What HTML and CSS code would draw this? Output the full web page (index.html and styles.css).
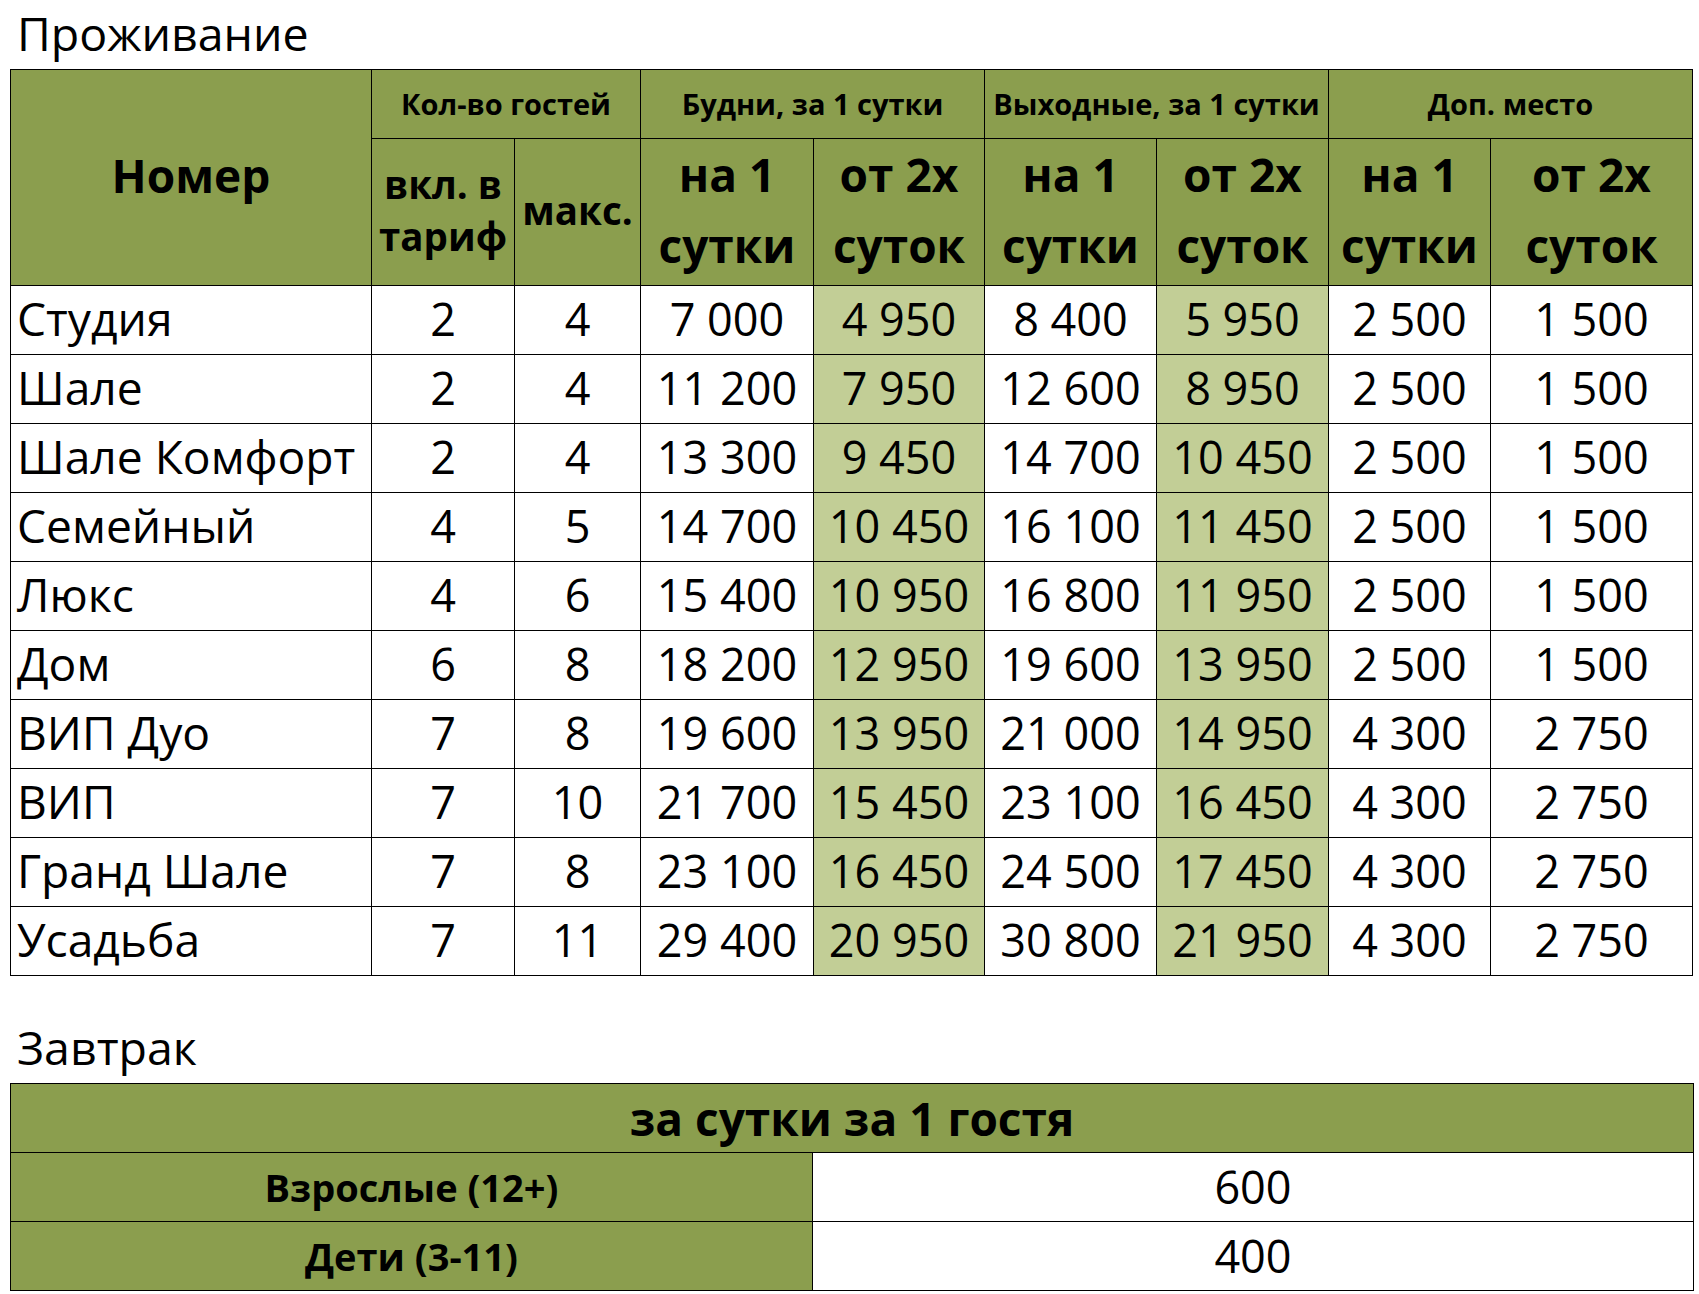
FILE: index.html
```html
<!DOCTYPE html>
<html lang="ru">
<head>
<meta charset="utf-8">
<title>Цены</title>
<link rel="stylesheet" href="styles.css">
</head>
<body>
<div class="page">
  <h2 class="section-title first">Проживание</h2>
  <table class="price">
    <colgroup>
      <col class="w-name"><col class="w-incl"><col class="w-max">
      <col class="w-a"><col class="w-b"><col class="w-c"><col class="w-d">
      <col class="w-e"><col class="w-f">
    </colgroup>
    <thead>
      <tr class="h1">
        <th rowspan="2" class="big">Номер</th>
        <th colspan="2" class="small">Кол-во гостей</th>
        <th colspan="2" class="small">Будни, за 1 сутки</th>
        <th colspan="2" class="small">Выходные, за 1 сутки</th>
        <th colspan="2" class="small">Доп. место</th>
      </tr>
      <tr class="h2">
        <th class="mid">вкл. в<br>тариф</th>
        <th class="mid">макс.</th>
        <th class="big tall">на 1<br>сутки</th>
        <th class="big tall">от 2х<br>суток</th>
        <th class="big tall">на 1<br>сутки</th>
        <th class="big tall">от 2х<br>суток</th>
        <th class="big tall">на 1<br>сутки</th>
        <th class="big tall">от 2х<br>суток</th>
      </tr>
    </thead>
    <tbody>
      <tr><td class="name">Студия</td><td>2</td><td>4</td><td>7 000</td><td class="hl">4 950</td><td>8 400</td><td class="hl">5 950</td><td>2 500</td><td>1 500</td></tr>
      <tr><td class="name">Шале</td><td>2</td><td>4</td><td>11 200</td><td class="hl">7 950</td><td>12 600</td><td class="hl">8 950</td><td>2 500</td><td>1 500</td></tr>
      <tr><td class="name">Шале Комфорт</td><td>2</td><td>4</td><td>13 300</td><td class="hl">9 450</td><td>14 700</td><td class="hl">10 450</td><td>2 500</td><td>1 500</td></tr>
      <tr><td class="name">Семейный</td><td>4</td><td>5</td><td>14 700</td><td class="hl">10 450</td><td>16 100</td><td class="hl">11 450</td><td>2 500</td><td>1 500</td></tr>
      <tr><td class="name">Люкс</td><td>4</td><td>6</td><td>15 400</td><td class="hl">10 950</td><td>16 800</td><td class="hl">11 950</td><td>2 500</td><td>1 500</td></tr>
      <tr><td class="name">Дом</td><td>6</td><td>8</td><td>18 200</td><td class="hl">12 950</td><td>19 600</td><td class="hl">13 950</td><td>2 500</td><td>1 500</td></tr>
      <tr><td class="name">ВИП Дуо</td><td>7</td><td>8</td><td>19 600</td><td class="hl">13 950</td><td>21 000</td><td class="hl">14 950</td><td>4 300</td><td>2 750</td></tr>
      <tr><td class="name">ВИП</td><td>7</td><td>10</td><td>21 700</td><td class="hl">15 450</td><td>23 100</td><td class="hl">16 450</td><td>4 300</td><td>2 750</td></tr>
      <tr><td class="name">Гранд Шале</td><td>7</td><td>8</td><td>23 100</td><td class="hl">16 450</td><td>24 500</td><td class="hl">17 450</td><td>4 300</td><td>2 750</td></tr>
      <tr><td class="name">Усадьба</td><td>7</td><td>11</td><td>29 400</td><td class="hl">20 950</td><td>30 800</td><td class="hl">21 950</td><td>4 300</td><td>2 750</td></tr>
    </tbody>
  </table>

  <h2 class="section-title second">Завтрак</h2>
  <table class="price breakfast">
    <colgroup>
      <col class="w-left"><col class="w-right">
    </colgroup>
    <thead>
      <tr><th colspan="2" class="bh">за сутки за 1 гостя</th></tr>
    </thead>
    <tbody>
      <tr><th class="bl">Взрослые (12+)</th><td>600</td></tr>
      <tr><th class="bl">Дети (3-11)</th><td>400</td></tr>
    </tbody>
  </table>
</div>
</body>
</html>
```

FILE: styles.css
```css
html, body {
  margin: 0;
  padding: 0;
  background: #ffffff;
}

body {
  font-family: "Open Sans", "Noto Sans", "DejaVu Sans", sans-serif;
  color: #000000;
}

.page {
  padding: 0 0 0 10px;
}

.section-title {
  font-weight: 400;
  font-size: 46.5px;
  line-height: 62px;
  margin: 0;
  padding-left: 7px;
}

.section-title.first {
  margin-top: 2px;
  margin-bottom: 5px;
}

.section-title.second {
  margin-top: 40px;
  margin-bottom: 5px;
}

.price {
  border-collapse: collapse;
  table-layout: fixed;
  width: 1683px;
}

.price th,
.price td {
  border: 1px solid #000000;
  padding: 0;
  text-align: center;
  vertical-align: middle;
  white-space: nowrap;
  overflow: hidden;
}

.w-name { width: 361px; }
.w-incl { width: 143px; }
.w-max { width: 126px; }
.w-a { width: 173px; }
.w-b { width: 171px; }
.w-c { width: 172px; }
.w-d { width: 172px; }
.w-e { width: 162px; }
.w-f { width: 202px; }

.price thead th {
  background: #8b9e4e;
  font-weight: 700;
}

.h1 th.small {
  height: 68px;
  font-size: 29px;
  line-height: 38px;
}

.h1 th.big {
  font-size: 46px;
  line-height: 62px;
  padding-bottom: 6px;
}

.h2 th {
  height: 139px;
}

.h2 th.mid {
  font-size: 38.5px;
  line-height: 52px;
  padding-bottom: 4px;
}

.h2 th.tall {
  font-size: 46px;
  line-height: 71px;
  padding-bottom: 4px;
}

.price tbody td {
  height: 66px;
  font-size: 45px;
  line-height: 60px;
  background: #ffffff;
  padding-bottom: 2px;
}

.price tbody td.name {
  text-align: left;
  padding-left: 6px;
  font-size: 46.2px;
}

.price tbody td.hl {
  background: #c2ce96;
}

.w-left { width: 802px; }
.w-right { width: 881px; }

.breakfast th.bh {
  height: 68px;
  font-size: 46px;
  line-height: 60px;
}

.breakfast tbody th.bl {
  background: #8b9e4e;
  font-weight: 700;
  font-size: 38px;
  line-height: 52px;
  height: 68px;
}

.breakfast tbody td {
  height: 68px;
  padding-bottom: 0;
}
```
